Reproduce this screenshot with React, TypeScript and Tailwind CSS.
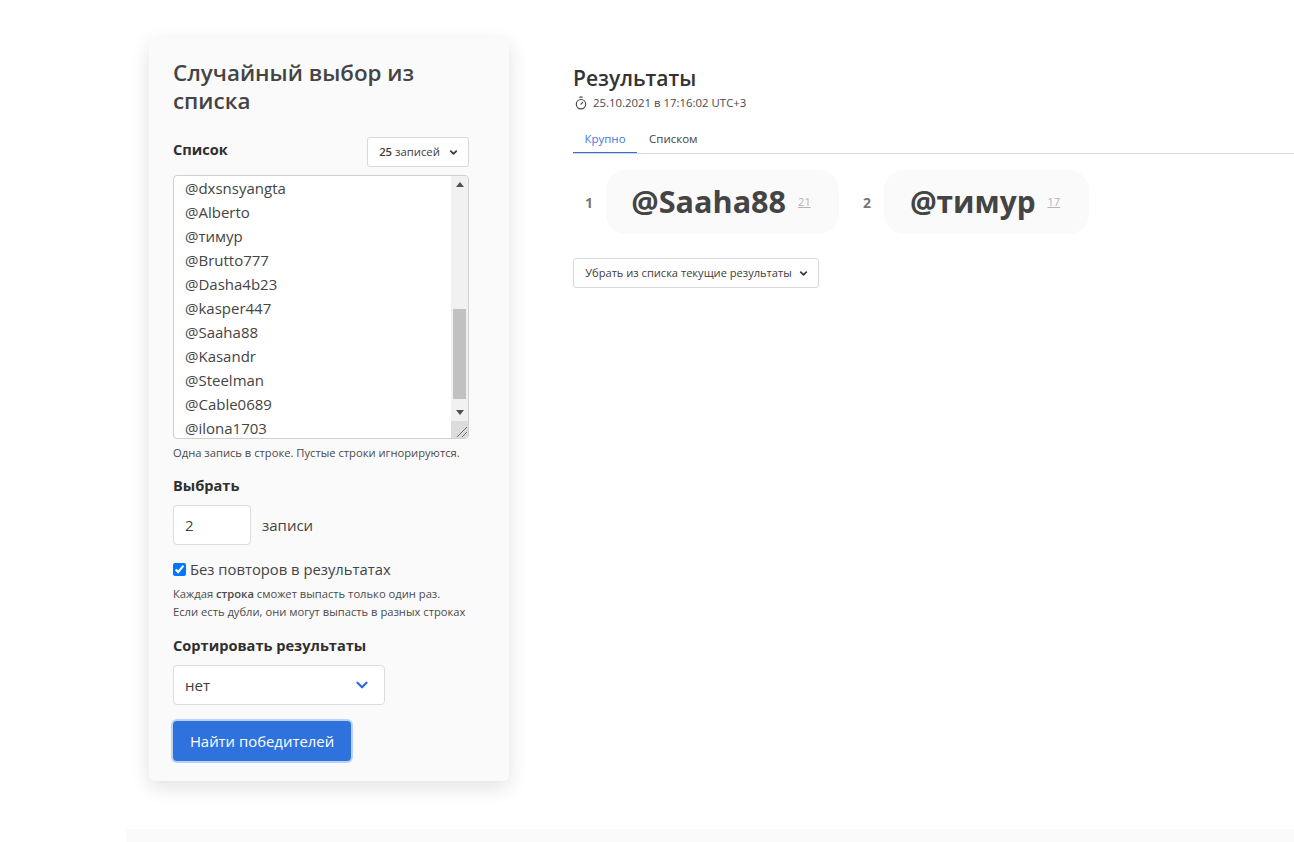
import { ChevronDown, Timer } from 'lucide-react';

const font = 'font-["Open_Sans","Noto_Sans",sans-serif]';

const rows = [
  '@dxsnsyangta',
  '@Alberto',
  '@тимур',
  '@Brutto777',
  '@Dasha4b23',
  '@kasper447',
  '@Saaha88',
  '@Kasandr',
  '@Steelman',
  '@Cable0689',
  '@ilona1703',
];

const winners = [
  { place: 1, name: '@Saaha88', line: 21, width: 'w-[233px]', size: 'text-[30.6px]' },
  { place: 2, name: '@тимур', line: 17, width: 'w-[205px]', size: 'text-[29.8px]' },
];

function FakeScrollbar() {
  return (
    <div className="w-[17px] shrink-0 bg-[#f1f1f1] flex flex-col items-center">
      <div className="h-[17px] flex items-center justify-center">
        <svg width="8" height="5" viewBox="0 0 8 5"><path d="M4 0 8 5H0z" fill="#505050" /></svg>
      </div>
      <div className="flex-1 w-full px-[2px] pt-[116px] pb-[5px]">
        <div className="h-[90px] bg-[#c1c1c1]" />
      </div>
      <div className="h-[17px] flex items-center justify-center">
        <svg width="8" height="5" viewBox="0 0 8 5"><path d="M0 0H8L4 5z" fill="#505050" /></svg>
      </div>
      <div className="h-[17px] w-full bg-[#dcdcdc] flex items-end justify-end">
        <svg width="14" height="14" viewBox="0 0 14 14">
          <path d="M13 3 3 13M13 8 8 13" stroke="#6b6b6b" strokeWidth="1" fill="none" />
        </svg>
      </div>
    </div>
  );
}

export default function App() {
  return (
    <div className={`${font} min-h-[842px] bg-white text-[#3c3c3c] overflow-hidden`}>
      <div className="flex pl-[149px] pt-[38px]">
        {/* Form card */}
        <aside className="w-[360px] h-[743px] shrink-0 bg-[#fafafa] rounded-[6px] shadow-[0_6px_20px_rgba(0,0,0,0.12)] px-[24px] pt-[21px]">
          <h1 className="text-[22.4px] leading-[28px] font-semibold text-[#444]">Случайный выбор из списка</h1>

          <div className="flex justify-between items-start mt-[22px] w-[296px]">
            <label className="text-[14.6px] leading-[24px] font-bold text-[#2f2f2f]">Список</label>
            <button className="h-[30px] w-[102px] bg-white border border-[#d9d9d9] rounded-[3px] text-[11.3px] text-[#3c3c3c] flex items-center justify-center gap-[8px] pl-[2px]">
              <span><b className="font-semibold">25</b> записей</span>
              <ChevronDown size={11} strokeWidth={4} />
            </button>
          </div>

          {/* List */}
          <div className="mt-[8px] w-[296px] h-[264px] flex bg-white border border-[#d0d0d0] rounded-[4px] overflow-hidden">
            <div className="flex-1 overflow-hidden pl-[11px] text-[15px] leading-[24px] text-[#444]">
              {rows.map(row => (
                <div key={row}>{row}</div>
              ))}
            </div>
            <FakeScrollbar />
          </div>
          <p className="mt-[5px] text-[11.2px] leading-[18px] text-[#4a4a4a]">Одна запись в строке. Пустые строки игнорируются.</p>

          <div className="mt-[11px] text-[14.6px] leading-[24px] font-bold text-[#2f2f2f]">Выбрать</div>
          <div className="mt-[8px] flex items-center gap-[11px]">
            <div className="w-[78px] h-[40px] bg-white border border-[#dcdcdc] rounded-[4px] pl-[11px] text-[15px] leading-[38px] text-[#444]">2</div>
            <span className="text-[15px] text-[#444]">записи</span>
          </div>

          <label className="mt-[12px] flex items-center gap-[4px] text-[14.8px] leading-[24px] text-[#444]">
            <input type="checkbox" defaultChecked className="w-[13px] h-[13px] accent-[#0075ff] m-0" />
            <span>Без повторов в результатах</span>
          </label>
          <p className="mt-[4px] text-[11.2px] leading-[18px] text-[#4a4a4a]">
            Каждая <b className="font-semibold">строка</b> сможет выпасть только один раз.
            <br />
            Если есть дубли, они могут выпасть в разных строках
          </p>

          <div className="mt-[12px] text-[14.6px] leading-[24px] font-bold text-[#2f2f2f]">Сортировать результаты</div>
          <div className="mt-[8px] w-[212px] h-[40px] bg-white border border-[#dcdcdc] rounded-[4px] pl-[11px] pr-[13px] flex items-center justify-between text-[15px] text-[#3c3c3c]">
            <span>нет</span>
            <ChevronDown size={18} strokeWidth={3} className="text-[#2f6fdb]" />
          </div>

          <button className="mt-[16px] h-[40px] w-[178px] bg-[#2f72de] text-white text-[14.9px] rounded-[4px] ring-2 ring-[#bcd2f5]">
            Найти победителей
          </button>
        </aside>

        {/* Results */}
        <main className="ml-[64px] flex-1 min-w-0 pt-[26px]">
          <h2 className="text-[21px] leading-[28px] font-semibold text-[#333]">Результаты</h2>
          <div className="mt-[2px] flex items-center gap-[5px] pl-[1px] text-[11.4px] leading-[18px] text-[#4a4a4a]">
            <Timer size={14} className="text-[#444]" />
            <span>25.10.2021 в 17:16:02 UTC+3</span>
          </div>

          <div className="mt-[12px] flex border-b border-[#d9d9d9] text-[11.5px]">
            <div className="w-[64px] h-[29px] leading-[29px] text-center text-[#3f78de] border-b border-[#2f6fdb] -mb-px">Крупно</div>
            <div className="ml-[12px] h-[29px] leading-[29px] text-[#444]">Списком</div>
          </div>

          <div className="mt-[16px] flex items-center">
            {winners.map(w => (
              <div key={w.place} className="flex items-center mr-[12px]">
                <span className="w-[33px] pl-[12px] text-[14px] font-bold text-[#777]">{w.place}</span>
                <div className={`${w.width} h-[64px] bg-[#fafafa] rounded-[20px] pr-[3px] flex items-center justify-center gap-[12px]`}>
                  <span className={`${w.size} font-bold text-[#444]`}>{w.name}</span>
                  <span className="text-[11px] underline text-[#b5b5b5]">{w.line}</span>
                </div>
              </div>
            ))}
          </div>

          <button className="mt-[24px] h-[30px] w-[246px] bg-white border border-[#d9d9d9] rounded-[3px] text-[11.1px] text-[#3c3c3c] flex items-center justify-center gap-[6px] pl-[2px]">
            <span>Убрать из списка текущие результаты</span>
            <ChevronDown size={11} strokeWidth={4} />
          </button>
        </main>
      </div>

      <div className="ml-[126px] mt-[48px] h-[13px] bg-[#fafafa]" />
    </div>
  );
}
